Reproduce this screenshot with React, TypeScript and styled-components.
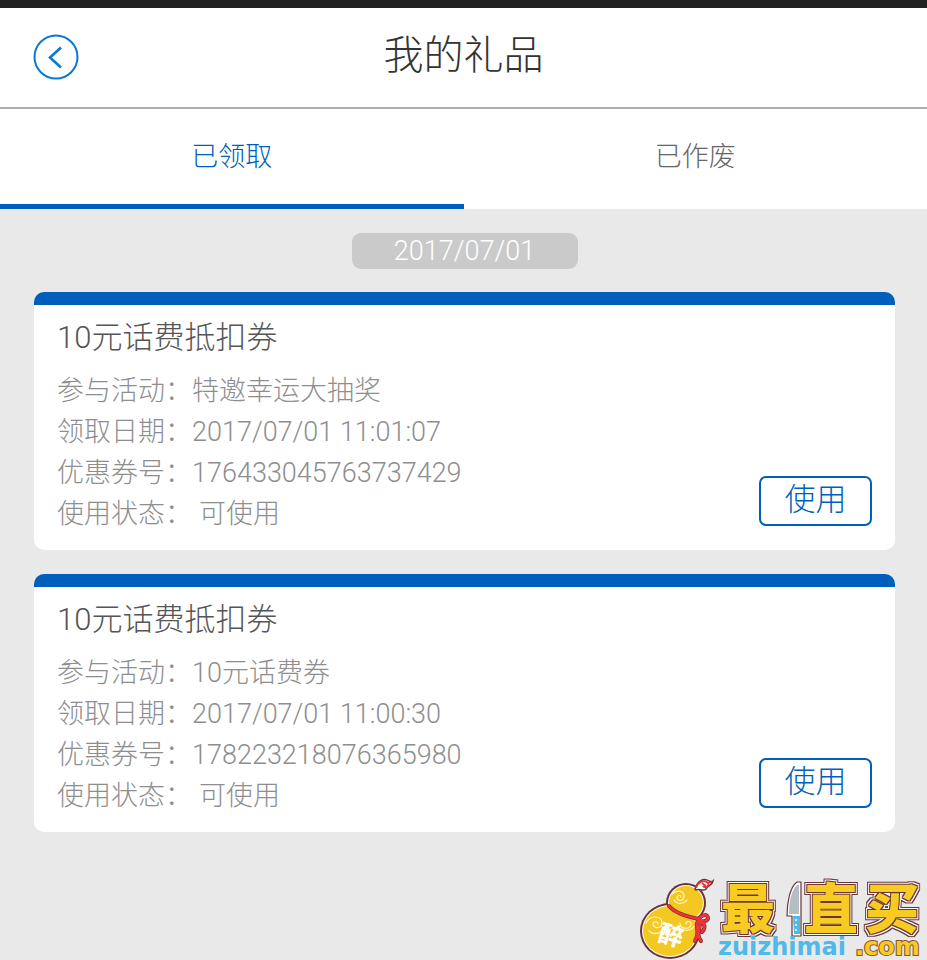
import React from 'react';
import styled, { createGlobalStyle } from 'styled-components';

const GlobalStyle = createGlobalStyle`
  * { box-sizing: border-box; }
  body {
    margin: 0;
    background: #e9e9e9;
    font-family: Roboto, "Noto Sans CJK SC", sans-serif;
    font-weight: 300;
  }
  button { font: inherit; cursor: pointer; }
`;

const Page = styled.div`
  display: flex;
  flex-direction: column;
  min-height: 100vh;
  border-top: 8px solid #222;
`;

const Header = styled.header`
  display: grid;
  grid-template-columns: 80px 1fr 80px;
  align-items: center;
  height: 101px;
  padding-bottom: 4px;
  background: #fff;
  border-bottom: 2px solid #b0b0b0;
`;

const BackButton = styled.button`
  display: flex;
  justify-content: flex-end;
  padding: 2px 1px 0 0;
  border: 0;
  background: none;
`;

const Title = styled.h1`
  margin: 0;
  font-size: 40px;
  line-height: 60px;
  font-weight: 300;
  text-align: center;
  color: #333;
`;

const Tabs = styled.nav`
  display: flex;
  background: #fff;
`;

const Tab = styled.button<{ $active?: boolean }>`
  flex: 1;
  height: 100px;
  padding: 0 0 4px;
  border: 0;
  border-bottom: 5px solid ${(p) => (p.$active ? '#005fbb' : '#fff')};
  background: none;
  color: ${(p) => (p.$active ? '#005fbb' : '#666')};
  && { font-size: 27px; }
`;

const Content = styled.main`
  display: flex;
  flex-direction: column;
  align-items: center;
  gap: 23px;
  padding: 24px 32px 16px 34px;
`;

const DateBadge = styled.time`
  min-width: 226px;
  border-radius: 9px;
  background: #cacaca;
  color: #fff;
  font-size: 27px;
  line-height: 36px;
  text-align: center;
`;

const CardList = styled.div`
  display: flex;
  flex-direction: column;
  gap: 24px;
  width: 100%;
`;

const Card = styled.article`
  display: flex;
  align-items: flex-end;
  justify-content: space-between;
  padding: 10px 23px 15px;
  border-top: 13px solid #005fbb;
  border-radius: 10px;
  background: #fff;
`;

const CardTitle = styled.h2`
  margin: 0 0 11px;
  font-size: 31px;
  line-height: 45px;
  font-weight: 300;
  color: #555;
`;

const Details = styled.dl`
  display: grid;
  grid-template-columns: 135px auto;
  margin: 0;
  font-size: 27px;
  line-height: 41px;
  color: #8e8e8e;
`;

const Label = styled.dt`
  white-space: nowrap;
`;

const Value = styled.dd<{ $indent?: boolean }>`
  margin: 0;
  padding-left: ${(p) => (p.$indent ? '7px' : '0')};
`;

const UseButton = styled.button`
  width: 113px;
  height: 50px;
  margin-bottom: 9px;
  padding: 0 0 3px;
  border: 2px solid #005fbb;
  border-radius: 7px;
  background: #fff;
  color: #005fbb;
  && { font-size: 31px; line-height: 41px; }
`;

const Footer = styled.footer`
  display: flex;
  justify-content: flex-end;
  margin-top: auto;
`;

const Logo = styled.svg`
  display: block;
`;

const BrandText = styled.text`
  font: 900 54px "Noto Sans CJK SC", sans-serif;
  text-anchor: middle;
  fill: #f8cb22;
`;

const SealText = styled.text`
  font: 900 24px "Noto Sans CJK SC", sans-serif;
  text-anchor: middle;
  fill: #fff;
`;

const DomainText = styled.text`
  font: 700 24px "DejaVu Sans", sans-serif;
`;

const gifts = [
  { activity: '特邀幸运大抽奖', date: '2017/07/01 11:01:07', code: '176433045763737429' },
  { activity: '10元话费券', date: '2017/07/01 11:00:30', code: '178223218076365980' },
];

const gourdLayers = [
  { fill: '#6a3438', grow: 2 },
  { fill: '#ffffff', grow: 0 },
  { fill: '#f3c822', grow: -1 },
];

const ribbon =
  'M33 32c7 8 19 11 30 13M63 45c3-5 9-5 9-1 0 3-5 4-9 3M62 47c-4 5 3 10-3 20M64 48c0 9-4 12 1 19M65 48c6 3 3 8 1 10';

function BrandLogo() {
  return (
    <Logo width="291" height="100" viewBox="0 -14 291 100" role="img" aria-label="最直买 zuizhimai.com">
      <defs>
        <filter id="outline" x="-10%" y="-10%" width="120%" height="120%" colorInterpolationFilters="sRGB">
          <feMorphology in="SourceAlpha" operator="dilate" radius="1" result="a1" />
          <feMorphology in="SourceAlpha" operator="dilate" radius="2" result="a2" />
          <feMorphology in="SourceAlpha" operator="dilate" radius="3" result="a3" />
          <feFlood floodColor="#6a3438" result="maroon" />
          <feFlood floodColor="#ffffff" result="white" />
          <feComposite in="maroon" in2="a3" operator="in" result="outer" />
          <feComposite in="white" in2="a2" operator="in" result="middle" />
          <feComposite in="maroon" in2="a1" operator="in" result="inner" />
          <feMerge>
            <feMergeNode in="outer" />
            <feMergeNode in="middle" />
            <feMergeNode in="inner" />
            <feMergeNode in="SourceGraphic" />
          </feMerge>
        </filter>
      </defs>
      {gourdLayers.map((l) => (
        <g key={l.fill} fill={l.fill}>
          <circle cx="50" cy="29" r={18 + l.grow} />
          <ellipse cx="34" cy="57" rx={28 + l.grow} ry={26 + l.grow} />
        </g>
      ))}
      <g fill="none" stroke="#fff6c8" strokeWidth="1.2" strokeLinecap="round">
        <path d="M36 20c5-5 13-3 12 3-1 5-8 4-7 0 1-2 4-2 4 0M38 26c3 5 10 4 13 0" />
        <path d="M10 49c4-8 16-8 16 0 0 6-9 6-9 1 0-3 5-3 5 0M13 57c5 5 14 2 15-4" />
        <path d="M44 49c0 6 9 7 11 2 1-4-5-5-5-1M49 56c4 1 8-1 9-4" />
      </g>
      <path d="M59 15c2-7 8-12 14-8 2 1 3 1 4 0-1 5-5 4-7 8-3 3-7-1-10 1z" fill="#fff" stroke="#6a3438" strokeWidth="1.5" />
      <path d="M60 14c2-6 8-9 12-5 2 3-3 6-5 3M66 9l4 3M72 9l4-1" fill="none" stroke="#e53039" strokeWidth="1.8" />
      <g fill="none" strokeLinecap="round" strokeLinejoin="round">
        <path d={ribbon} stroke="#8b282d" strokeWidth="4" />
        <path d={ribbon} stroke="#ed343c" strokeWidth="2.6" />
      </g>
      <SealText x="35" y="70" transform="rotate(16 35 62)">醉</SealText>
      <g filter="url(#outline)">
        <BrandText x="112" y="55">最</BrandText>
        <BrandText x="195" y="55">直</BrandText>
        <BrandText x="256" y="55">买</BrandText>
      </g>
      <path d="M161 8c-7 5-10 20-10 34h5v20h9V8z" fill="#fff" stroke="#6a3438" strokeWidth="1.2" strokeLinejoin="round" />
      <path d="M161 11c-6 6-8 17-8 29h10V11z" fill="#b5bcc3" />
      <path d="M157 42h7v18h-6z" fill="#4fb9e9" />
      <path d="M160 45v2M160 50v2M160 55v2" stroke="#fff" strokeWidth="1.5" />
      <DomainText x="82" y="81" fill="#4fb9e9">zuizhimai</DomainText>
      <DomainText x="219" y="81" fill="#f8cb22" stroke="#8a5030" strokeWidth="2" paintOrder="stroke">.com</DomainText>
    </Logo>
  );
}

export default function App() {
  return (
    <Page>
      <GlobalStyle />
      <Header>
        <BackButton aria-label="返回">
          <svg width="46" height="46" viewBox="0 0 46 46" fill="none" stroke="#0a78d8">
            <circle cx="23" cy="23" r="21.5" strokeWidth="2" />
            <path d="M28 13.5 17 23.5l11 10" strokeWidth="2.6" />
          </svg>
        </BackButton>
        <Title>我的礼品</Title>
      </Header>
      <Tabs>
        <Tab $active>已领取</Tab>
        <Tab>已作废</Tab>
      </Tabs>
      <Content>
        <DateBadge>2017/07/01</DateBadge>
        <CardList>
          {gifts.map((g) => (
            <Card key={g.code}>
              <div>
                <CardTitle>10元话费抵扣券</CardTitle>
                <Details>
                  <Label>参与活动：</Label><Value>{g.activity}</Value>
                  <Label>领取日期：</Label><Value>{g.date}</Value>
                  <Label>优惠券号：</Label><Value>{g.code}</Value>
                  <Label>使用状态：</Label><Value $indent>可使用</Value>
                </Details>
              </div>
              <UseButton>使用</UseButton>
            </Card>
          ))}
        </CardList>
      </Content>
      <Footer>
        <BrandLogo />
      </Footer>
    </Page>
  );
}
